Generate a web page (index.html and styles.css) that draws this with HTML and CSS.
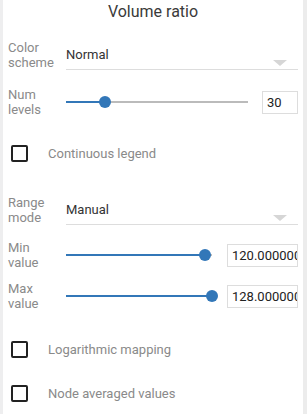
FILE: index.html
```html
<!DOCTYPE html>
<html lang="en">
<head>
    <meta charset="UTF-8">
    <meta name="viewport" content="width=device-width, initial-scale=1.0">
    <title>Volume ratio</title>
    <link rel="stylesheet" href="styles.css">
</head>
<body>
<div class="panel">
    <div class="panel_inner">
        <div class="title">Volume ratio</div>
        <div class="row row_scheme">
            <div class="label">Color<br>scheme</div>
            <div class="select">Normal<span class="arrow"></span></div>
        </div>
        <div class="row row_levels">
            <div class="label">Num<br>levels</div>
            <div class="slider">
                <div class="track"><div class="fill" style="width: 39px"></div><div class="thumb" style="left: 39px"></div></div>
            </div>
            <input class="num num_small" type="text" value="30">
        </div>
        <div class="check check_legend">
            <span class="box"></span><span class="check_text">Continuous legend</span>
        </div>
        <div class="row row_range">
            <div class="label">Range<br>mode</div>
            <div class="select">Manual<span class="arrow"></span></div>
        </div>
        <div class="row row_min">
            <div class="label">Min<br>value</div>
            <div class="slider">
                <div class="track"><div class="fill" style="width: 139px"></div><div class="thumb" style="left: 139px"></div></div>
            </div>
            <input class="num" type="text" value="120.000000">
        </div>
        <div class="row row_max">
            <div class="label">Max<br>value</div>
            <div class="slider">
                <div class="track"><div class="fill" style="width: 100%"></div><div class="thumb" style="left: 100%"></div></div>
            </div>
            <input class="num" type="text" value="128.000000">
        </div>
        <div class="check check_log">
            <span class="box"></span><span class="check_text">Logarithmic mapping</span>
        </div>
        <div class="check check_node">
            <span class="box"></span><span class="check_text">Node averaged values</span>
        </div>
    </div>
</div>
</body>
</html>
```

FILE: styles.css
```css
* {
    box-sizing: border-box;
    margin: 0;
    padding: 0;
}
body {
    font-family: Roboto, 'Liberation Sans', sans-serif;
    background: #fff;
}
.panel {
    width: 307px;
    height: 414px;
    border-left: 3px solid #eeeeef;
    border-right: 4px solid #ececec;
    overflow: hidden;
}
.panel_inner {
    padding: 0 5px 0 5px;
}
.title {
    font-size: 16px;
    line-height: 24px;
    color: #3a3a3a;
    text-align: center;
    height: 24px;
    margin-bottom: 16px;
}
.row {
    display: flex;
    align-items: center;
    height: 30px;
}
.label {
    width: 58px;
    flex-shrink: 0;
    font-size: 13px;
    line-height: 15px;
    color: #8a8a8a;
}
.select {
    flex: 1;
    align-self: stretch;
    position: relative;
    font-size: 13px;
    line-height: 15px;
    color: #333;
    padding-top: 7px;
    border-bottom: 1px solid #ddd;
}
.arrow {
    position: absolute;
    right: 11px;
    top: 20px;
    width: 0;
    height: 0;
    border-left: 7px solid transparent;
    border-right: 7px solid transparent;
    border-top: 6px solid #d6d6d6;
}
.row_levels {
    margin-top: 17px;
}
.slider {
    flex: 1;
    padding-right: 14px;
}
.row_min .slider,
.row_max .slider {
    padding-right: 15px;
}
.track {
    position: relative;
    height: 2px;
    background: #bbb;
}
.fill {
    height: 2px;
    background: #3277b8;
}
.thumb {
    position: absolute;
    top: -5px;
    width: 12px;
    height: 12px;
    margin-left: -6px;
    border-radius: 50%;
    background: #3277b8;
}
.num {
    width: 71px;
    height: 23px;
    border: 1px solid #ddd;
    font-family: Roboto, 'Liberation Sans', sans-serif;
    font-size: 13px;
    color: #222;
    padding: 0 0 0 4px;
    outline: none;
}
.num_small {
    width: 36px;
}
.check {
    display: flex;
    align-items: center;
    height: 30px;
}
.box {
    width: 17px;
    height: 17px;
    margin-left: 3px;
    border: 2px solid #222;
    border-radius: 2px;
    flex-shrink: 0;
}
.check_text {
    margin-left: 20px;
    font-size: 13px;
    color: #8a8a8a;
}
.check_legend {
    margin-top: 21px;
}
.row_range {
    margin-top: 27px;
}
.row_min {
    margin-top: 15px;
}
.row_max {
    margin-top: 11px;
}
.check_log {
    margin-top: 23px;
}
.check_node {
    margin-top: 14px;
}
```
